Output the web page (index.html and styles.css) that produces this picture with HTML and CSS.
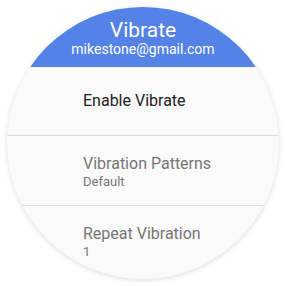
FILE: index.html
```html
<!doctype html>
<html>
<head>
	<meta charset="utf-8">
	<title>Vibrate</title>
	<link rel="stylesheet" href="styles.css">
</head>
<body>
	<div class="watch">
		<div class="header">
			<div class="title">Vibrate</div>
			<div class="account">mikestone@gmail.com</div>
		</div>
		<div class="row single">
			<div class="label">Enable Vibrate</div>
		</div>
		<div class="row">
			<div class="label muted">Vibration Patterns</div>
			<div class="value">Default</div>
		</div>
		<div class="row last">
			<div class="label muted">Repeat Vibration</div>
			<div class="value">1</div>
		</div>
	</div>
</body>
</html>
```

FILE: styles.css
```css
html, body {
	margin: 0;
	padding: 0;
	background-color: #fff;
}
body {
	width: 286px;
	height: 286px;
	overflow: hidden;
	font-family: Roboto, "Liberation Sans", sans-serif;
}
.watch {
	width: 272px;
	height: 272px;
	margin: 7px;
	border-radius: 50%;
	overflow: hidden;
	background-color: #fafafa;
	box-shadow: 0 1px 5px rgba(0, 0, 0, 0.14);
}
.header {
	height: 60px;
	padding-top: 12px;
	box-sizing: border-box;
	background-color: #5482e6;
	color: #fff;
	text-align: center;
}
.title {
	font-size: 21px;
	line-height: 22px;
}
.account {
	font-size: 14px;
	line-height: 16px;
}
.row {
	height: 70px;
	padding: 19px 0 0 76px;
	box-sizing: border-box;
	border-bottom: 1px solid #dcdcdc;
}
.row.single {
	height: 69px;
	padding-top: 24px;
}
.row.last {
	border-bottom: none;
}
.label {
	font-size: 16px;
	line-height: 18px;
	color: #212121;
}
.single .label {
	line-height: 20px;
}
.muted {
	color: #767676;
}
.value {
	font-size: 13px;
	line-height: 17px;
	color: #767676;
}
```
